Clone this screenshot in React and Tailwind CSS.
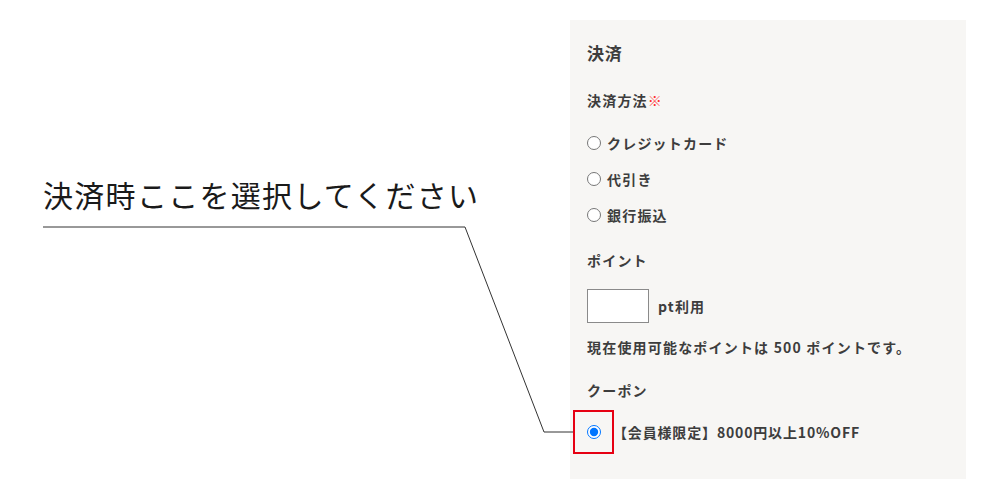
import React from 'react';

const font = { fontFamily: '"Noto Sans CJK JP", "Noto Sans", sans-serif' };

const Radio = ({ label, checked, top }) => (
  <label className={`flex items-center h-5 ${top}`}>
    <input type="radio" name="pay" defaultChecked={checked} className="m-0 w-[14px] h-[14px]" />
    <span className="ml-[6px]">{label}</span>
  </label>
);

export default function App() {
  return (
    <div className="relative w-[1000px] h-[500px] bg-white flex" style={font}>
      {/* annotation */}
      <div className="w-[570px] pl-[43px] pt-[174px]">
        <p className="text-[30px] leading-[40px] tracking-[1.3px] text-[#1a1a1a]">決済時ここを選択してください</p>
      </div>
      <svg className="absolute inset-0 pointer-events-none" width="1000" height="500">
        <polyline points="43,227 465,227 544,432 574,432" fill="none" stroke="#333" strokeWidth="1" />
      </svg>

      {/* payment panel */}
      <div className="mt-5 w-[396px] h-[459px] bg-[#f7f6f4] pl-[17px] pt-[21px] text-[14px] font-bold text-[#3d3d3d] tracking-[0.085em]">
        <h2 className="h-6 leading-6 text-[17px] tracking-[0.04em]">決済</h2>
        <div className="mt-[25px] h-5 leading-5">
          決済方法<span className="text-[#ff2d2d]">※</span>
        </div>
        <Radio label="クレジットカード" top="mt-[23px]" />
        <Radio label="代引き" top="mt-4" />
        <Radio label="銀行振込" top="mt-4" />
        <div className="mt-[25px] h-5 leading-5">ポイント</div>
        <div className="mt-[19px] flex items-center">
          <input type="text" className="w-[62px] h-[34px] bg-white border border-[#8a8a8a]" />
          <span className="ml-[9px]">pt利用</span>
        </div>
        <div className="mt-[14px] h-5 leading-5">現在使用可能なポイントは 500 ポイントです。</div>
        <div className="mt-[23px] h-5 leading-5">クーポン</div>
        <div className="mt-[22px] h-5 flex items-center">
          <span className="relative flex">
            <input type="radio" name="coupon" defaultChecked className="m-0 w-[14px] h-[14px]" />
            <span className="absolute -left-[14px] -right-[13px] -top-[15px] -bottom-[15px] border-2 border-[#e60012]"></span>
          </span>
          <span className="ml-[12px] tracking-[0.06em]">【会員様限定】8000円以上10%OFF</span>
        </div>
      </div>
    </div>
  );
}
